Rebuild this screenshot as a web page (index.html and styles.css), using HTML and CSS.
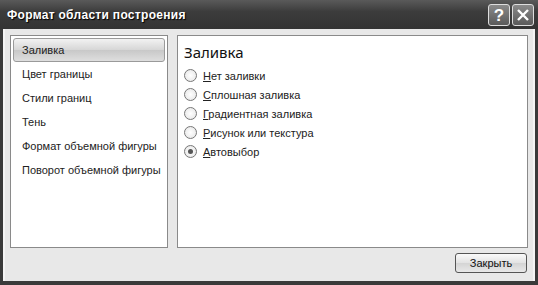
FILE: index.html
```html
<!DOCTYPE html>
<html lang="ru">
<head>
    <meta charset="UTF-8">
    <title>Формат области построения</title>
    <link rel="stylesheet" href="styles.css">
</head>
<body>
    <div class="dialog">
        <div class="titlebar">
            <span class="title">Формат области построения</span>
            <div class="title-buttons">
                <div class="tbtn">?</div>
                <div class="tbtn">
                    <svg width="14" height="14" viewBox="0 0 14 14"><path d="M2 2 L12 12 M12 2 L2 12" stroke="#fff" stroke-width="2.4"/></svg>
                </div>
            </div>
        </div>
        <div class="frame">
            <div class="panels">
                <div class="nav">
                    <div class="nav-item active">Заливка</div>
                    <div class="nav-item">Цвет границы</div>
                    <div class="nav-item">Стили границ</div>
                    <div class="nav-item">Тень</div>
                    <div class="nav-item">Формат объемной фигуры</div>
                    <div class="nav-item">Поворот объемной фигуры</div>
                </div>
                <div class="content">
                    <h2>Заливка</h2>
                    <div class="radio"><span class="dot"></span><span><u>Н</u>ет заливки</span></div>
                    <div class="radio"><span class="dot"></span><span><u>С</u>плошная заливка</span></div>
                    <div class="radio"><span class="dot"></span><span><u>Г</u>радиентная заливка</span></div>
                    <div class="radio"><span class="dot"></span><span><u>Р</u>исунок или текстура</span></div>
                    <div class="radio"><span class="dot checked"></span><span><u>А</u>втовыбор</span></div>
                </div>
            </div>
            <div class="footer">
                <button class="close-btn">Закрыть</button>
            </div>
        </div>
    </div>
</body>
</html>
```

FILE: styles.css
```css
* {
    margin: 0;
    padding: 0;
    box-sizing: border-box;
}

body {
    width: 538px;
    height: 285px;
    overflow: hidden;
    font-family: 'Liberation Sans', Arial, sans-serif;
    background: #2a2a2a;
}

.dialog {
    width: 538px;
    height: 285px;
    background: #3a3a3a;
    display: flex;
    flex-direction: column;
    padding: 0 3px 4px 3px;
}

.titlebar {
    height: 29px;
    display: flex;
    align-items: center;
    justify-content: space-between;
    background: linear-gradient(#5a5a5a, #3c3c3c 40%, #333 100%);
    margin: 0 -3px;
    padding-left: 7px;
    padding-right: 4px;
}

.title {
    color: #fff;
    font-family: 'Liberation Sans', Arial, sans-serif;
    font-weight: bold;
    font-size: 12px;
    letter-spacing: 0.3px;
    text-shadow: 1px 1px 1px #000;
}

.title-buttons {
    display: flex;
    gap: 2px;
    margin-top: 1px;
}

.tbtn {
    width: 22px;
    height: 22px;
    border: 1px solid #ddd;
    border-radius: 3px;
    background: linear-gradient(#8a8a8a, #5a5a5a);
    color: #fff;
    font-weight: bold;
    font-size: 17px;
    display: flex;
    align-items: center;
    justify-content: center;
    line-height: 1;
}

.frame {
    flex: 1;
    background: #e8e8e8;
    border-left: 2px solid #f4f4f4;
    border-right: 2px solid #f4f4f4;
    display: flex;
    flex-direction: column;
    padding: 6px 5px 0 5px;
}

.panels {
    display: flex;
    gap: 9px;
    height: 213px;
}

.nav {
    width: 158px;
    background: #fff;
    border: 1px solid #8a8a8a;
    padding: 2px 2px;
}

.nav-item {
    height: 24px;
    font-size: 11px;
    color: #222;
    padding-left: 9px;
    display: flex;
    align-items: center;
    white-space: nowrap;
}

.nav-item.active {
    border: 1px solid #9a9a9a;
    border-radius: 3px;
    background: linear-gradient(#f2f2f2, #d6d6d6 50%, #c8c8c8 51%, #dedede);
    padding-left: 8px;
}

.content {
    flex: 1;
    background: #fff;
    border: 1px solid #8a8a8a;
    padding: 6px 6px;
}

.content h2 {
    font-family: 'Noto Sans', 'Liberation Sans', sans-serif;
    font-size: 15px;
    font-weight: normal;
    color: #111;
    height: 22px;
    margin-bottom: 2px;
}

.radio {
    height: 19px;
    display: flex;
    align-items: center;
    gap: 6px;
    font-size: 11px;
    color: #222;
    white-space: nowrap;
}

.dot {
    width: 13px;
    height: 13px;
    border-radius: 50%;
    border: 1px solid #777;
    background: radial-gradient(#fff, #e4e4e4);
    display: flex;
    align-items: center;
    justify-content: center;
}

.dot.checked::after {
    content: "";
    width: 5px;
    height: 5px;
    border-radius: 50%;
    background: #555;
}

.footer {
    flex: 1;
    display: flex;
    justify-content: flex-end;
    align-items: flex-start;
    padding-top: 5px;
    padding-right: 1px;
}

.close-btn {
    width: 72px;
    height: 20px;
    font-family: 'Liberation Sans', Arial, sans-serif;
    font-size: 11px;
    color: #111;
    border: 1px solid #555;
    border-radius: 3px;
    background: linear-gradient(#fafafa, #e2e2e2 50%, #d4d4d4 51%, #e8e8e8);
}
```
